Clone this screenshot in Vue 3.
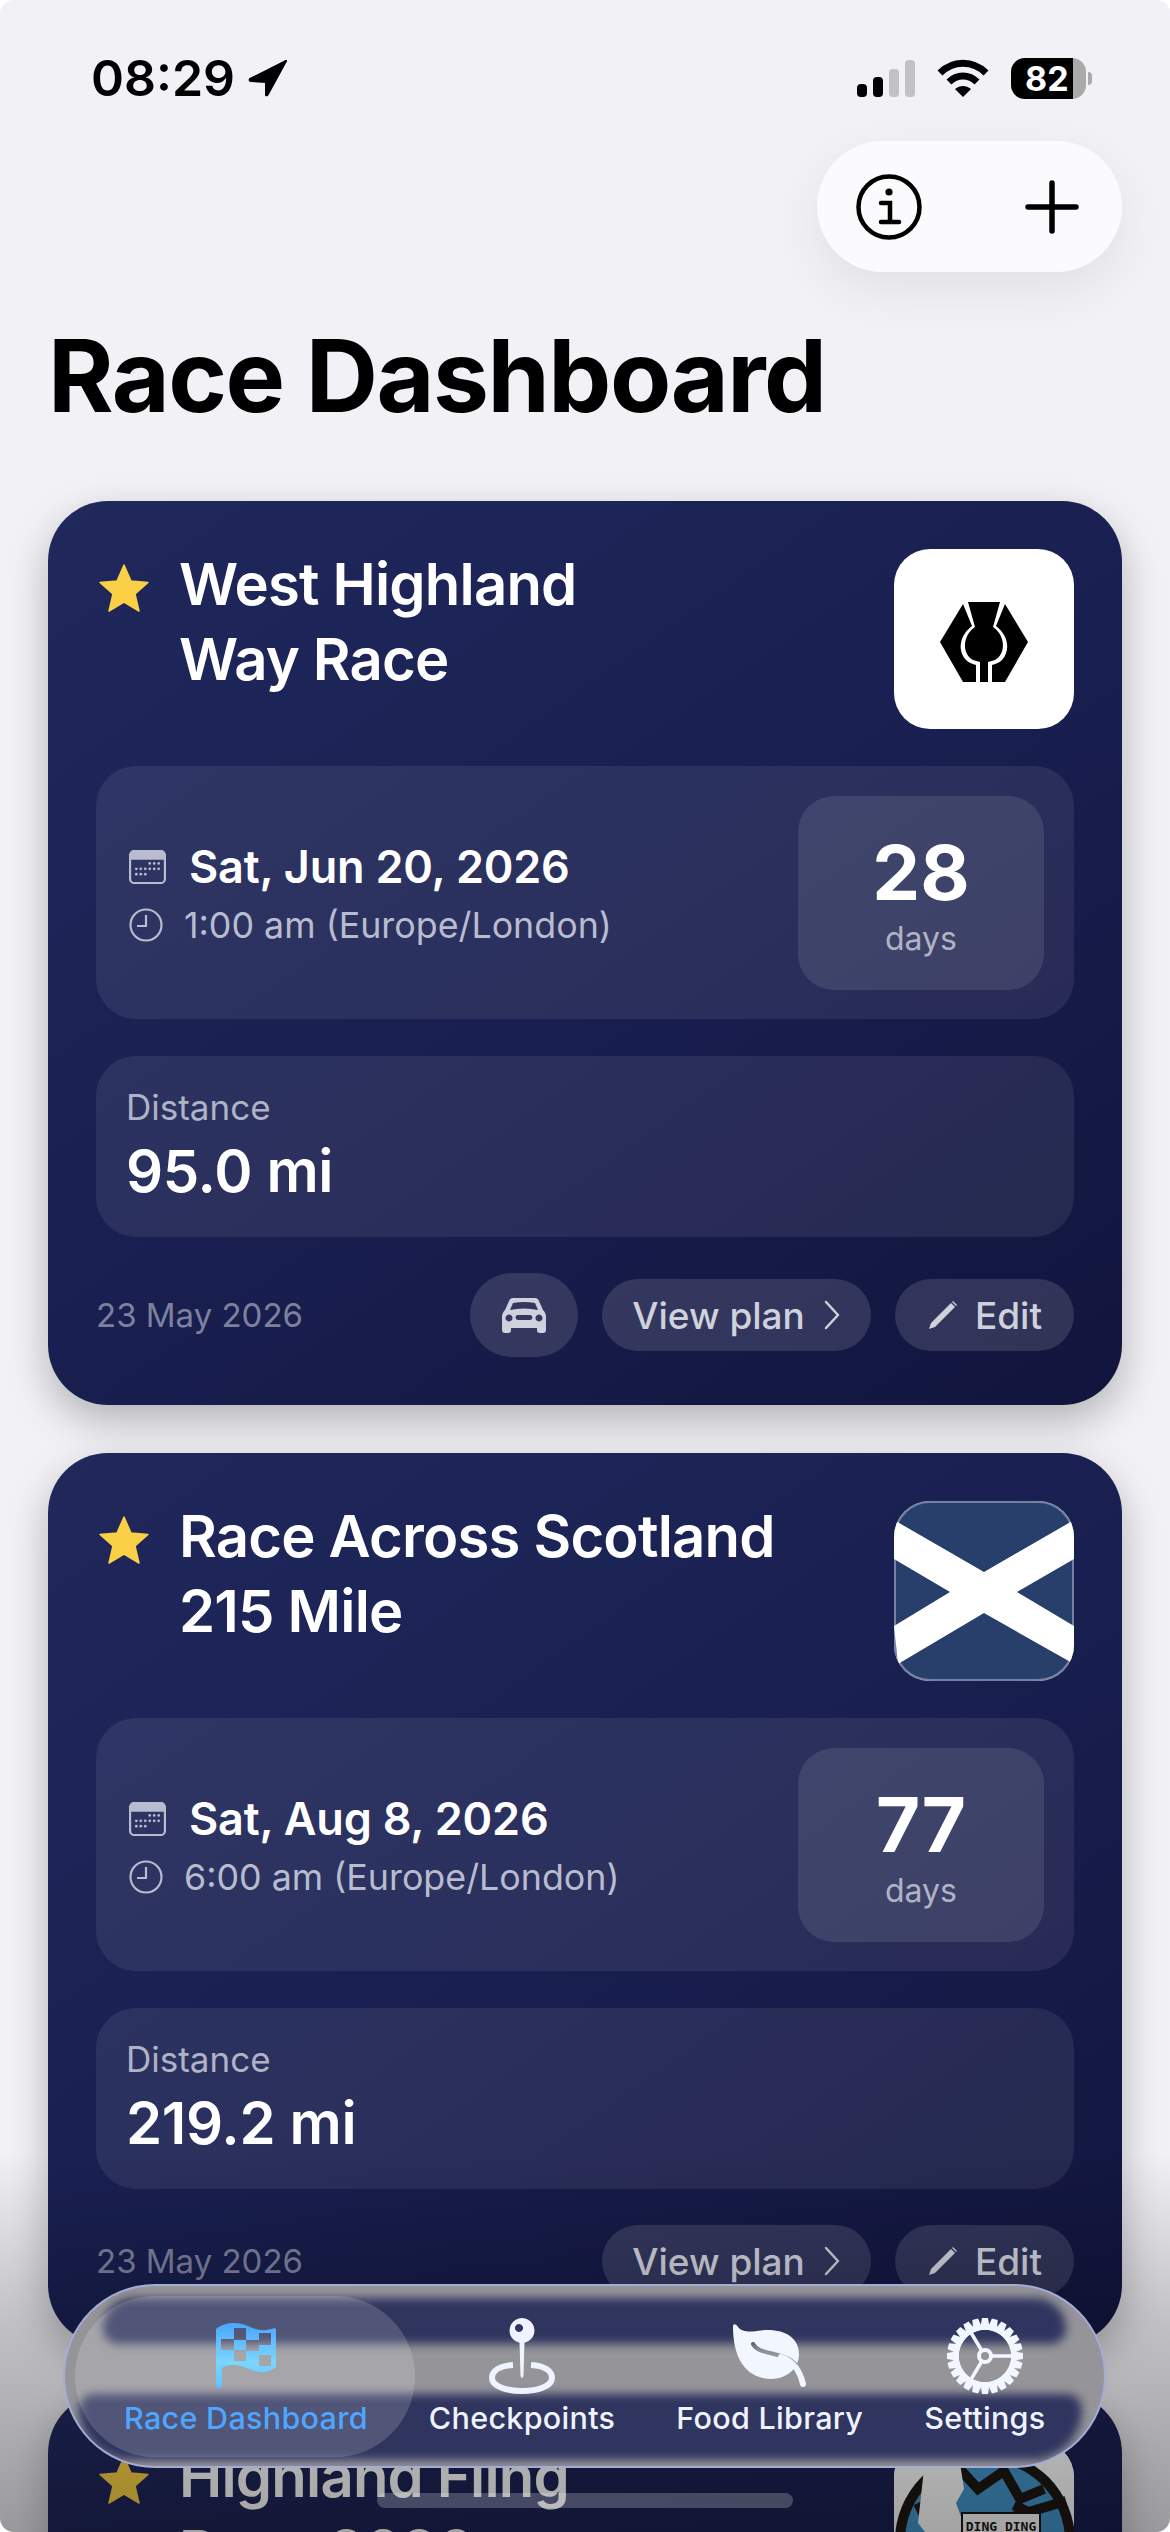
<script setup>
const races = [
  {
    name: ['West Highland', 'Way Race'],
    logo: 'thistle',
    date: 'Sat, Jun 20, 2026',
    time: '1:00 am (Europe/London)',
    days: 28,
    distance: '95.0 mi',
    added: '23 May 2026',
    car: true
  },
  {
    name: ['Race Across Scotland', '215 Mile'],
    logo: 'saltire',
    date: 'Sat, Aug 8, 2026',
    time: '6:00 am (Europe/London)',
    days: 77,
    distance: '219.2 mi',
    added: '23 May 2026',
    car: false
  },
  {
    name: ['Highland Fling', 'Race 2026'],
    logo: 'ding',
    date: 'Sat, Apr 24, 2027',
    time: '6:00 am (Europe/London)',
    days: 337,
    distance: '53.0 mi',
    added: '23 May 2026',
    car: false
  }
]

const tabs = [
  { label: 'Race Dashboard', icon: 'flag', active: true },
  { label: 'Checkpoints', icon: 'pin' },
  { label: 'Food Library', icon: 'leaf' },
  { label: 'Settings', icon: 'gear' }
]

const gearTeeth = Array.from({ length: 24 }, (_, i) => i * 15)
const calendarDots = [
  [23, 15], [28, 15], [33, 15],
  [8, 21], [13, 21], [18, 21], [23, 21], [28, 21], [33, 21],
  [8, 27], [13, 27], [18, 27]
]
</script>

<template>
  <div class="screen">
    <div class="status-bar">
      <div class="status-time">
        <span>08:29</span>
        <svg class="status-arrow" viewBox="0 0 40 38"><path d="M38 2 L2 20 Q1 22 3 22 L18 23 L18 36 Q19 37 20 35 Z" fill="#000" stroke="#000" stroke-width="2" stroke-linejoin="round" /></svg>
      </div>
      <div class="status-icons">
        <div class="signal">
          <i class="bar on b1"></i>
          <i class="bar on b2"></i>
          <i class="bar b3"></i>
          <i class="bar b4"></i>
        </div>
        <svg class="wifi" viewBox="0 0 52 38">
          <path d="M3 14 C16 1 36 1 49 14" fill="none" stroke="#000" stroke-width="7" />
          <path d="M12 23 C20 15 32 15 40 23" fill="none" stroke="#000" stroke-width="7" />
          <path d="M18 30 C23 26 29 26 34 30 L26 38 Z" fill="#000" />
        </svg>
        <div class="battery">
          <div class="battery-body"><span>82</span></div>
          <i class="battery-nub"></i>
        </div>
      </div>
    </div>

    <div class="top-actions">
      <div class="action-pill">
        <svg class="info-icon" viewBox="0 0 66 66" fill="none" stroke="#000" stroke-width="4.5">
          <circle cx="33" cy="33" r="30.5" />
          <circle cx="33" cy="18" r="3.6" fill="#000" stroke="none" />
          <path d="M25 29 H34 V47 M25 48 H43" stroke-linecap="round" />
        </svg>
        <svg class="plus-icon" viewBox="0 0 54 54" fill="none" stroke="#000" stroke-width="5.5" stroke-linecap="round">
          <path d="M27 3 V51 M3 27 H51" />
        </svg>
      </div>
    </div>

    <h1 class="page-title">Race Dashboard</h1>

    <div class="race-list">
      <div v-for="race in races" :key="race.name[0]" class="race-card">
        <div class="card-head">
          <svg class="star" viewBox="0 0 50 48"><path d="M25 1 L32 17 L49 18.500 L36 30 L40 47 L25 38 L10 47 L14 30 L1 18.500 L18 17 Z" fill="#f9d046" stroke="#f9d046" stroke-width="1.500" stroke-linejoin="round" /></svg>
          <div class="race-name">
            <div v-for="line in race.name" :key="line">{{ line }}</div>
          </div>
          <div class="race-logo" :class="'logo-' + race.logo">
            <svg v-if="race.logo === 'thistle'" class="thistle" viewBox="0 0 88 80">
              <path d="M23 2 L32 24 C20 33 17 48 26 58 C29 61 33 62 36 63 L36 80 L23 80 L0 40 Z" fill="#000" />
              <path d="M65 2 L56 24 C68 33 71 48 62 58 C59 61 55 62 52 63 L52 80 L65 80 L88 40 Z" fill="#000" />
              <path d="M28 0 H60 L53 25 C66 34 66 52 55 58 L48 60 V80 H40 V60 L33 58 C22 52 22 34 35 25 Z" fill="#000" />
            </svg>
            <svg v-else-if="race.logo === 'saltire'" viewBox="0 0 180 180">
              <rect width="180" height="180" fill="#283f6c" />
              <polygon points="0,19 90,71 180,19 180,58 123,91 180,125 180,163 90,112 4,163 0,125 56,91 0,58" fill="#fff" />
            </svg>
            <svg v-else viewBox="0 0 180 180">
              <rect width="180" height="180" fill="#fff" />
              <circle cx="91" cy="100" r="90" fill="#1c1712" />
              <circle cx="91" cy="100" r="80" fill="#4596cc" />
              <path d="M62 24 L84 48 L110 30 L126 58 L150 48 M118 76 L172 60 M24 62 L38 90 L20 112 M120 64 L136 72" fill="none" stroke="#1c1712" stroke-width="10" />
              <path d="M30 28 L66 22 L70 48 L62 62 L76 100 L50 130 L38 100 L24 82 Z" fill="#fff" />
              <rect x="68" y="72" width="78" height="26" fill="#fff" stroke="#1c1712" stroke-width="2" />
              <text x="107" y="90" font-size="13" font-weight="700" font-family="'DejaVu Sans Mono', monospace" text-anchor="middle" fill="#1c1712">DING DING</text>
            </svg>
          </div>
        </div>

        <div class="date-block">
          <div class="date-info">
            <div class="date-line">
              <svg class="calendar" viewBox="0 0 41 38">
                <rect x="1" y="1" width="39" height="36" rx="5" fill="none" stroke="#b9bccf" stroke-width="2.500" />
                <path d="M1 11 V6 a5 5 0 0 1 5 -5 H35 a5 5 0 0 1 5 5 V11 Z" fill="#b9bccf" />
                <circle v-for="dot in calendarDots" :key="dot.join()" :cx="dot[0]" :cy="dot[1]" r="1.500" fill="#b9bccf" />
              </svg>
              <span>{{ race.date }}</span>
            </div>
            <div class="time-line">
              <svg class="clock" viewBox="0 0 34 34" fill="none" stroke="#b9bccf" stroke-width="2.200">
                <circle cx="17" cy="17" r="15.500" />
                <path d="M17 7 V18 H8" />
              </svg>
              <span>{{ race.time }}</span>
            </div>
          </div>
          <div class="days-box">
            <div class="days-num">{{ race.days }}</div>
            <div class="days-label">days</div>
          </div>
        </div>

        <div class="distance-block">
          <div class="distance-label">Distance</div>
          <div class="distance-value">{{ race.distance }}</div>
        </div>

        <div class="card-foot">
          <div class="added">{{ race.added }}</div>
          <div class="foot-actions">
            <button v-if="race.car" class="chip chip-car">
              <svg viewBox="0 0 44 36">
                <path fill-rule="evenodd" fill="#cfd1dc" d="M11 1 H33 C35 1 36 2 37 4 L41 13 C43 15 44 17 44 20 V33 C44 35 43 36 41 36 H38 C36 36 35 35 35 33 V31 H9 V33 C9 35 8 36 6 36 H3 C1 36 0 35 0 33 V20 C0 17 1 15 3 13 L7 4 C8 2 9 1 11 1 Z M11 6 L8 13 Q22 10 36 13 L33 6 Q22 4 11 6 Z M7 17.500 a3.500 3.500 0 1 0 0.010 0 Z M37 17.500 a3.500 3.500 0 1 0 0.010 0 Z M16 18 H28 a2.500 2.500 0 0 1 0 5 H16 a2.500 2.500 0 0 1 0 -5 Z" />
              </svg>
            </button>
            <button class="chip">
              <span>View plan</span>
              <svg class="chevron" viewBox="0 0 18 30" fill="none" stroke="#cfd1dc" stroke-width="2.500" stroke-linecap="round" stroke-linejoin="round"><path d="M3 2 L15 15 L3 28" /></svg>
            </button>
            <button class="chip chip-edit">
              <svg class="pencil" viewBox="0 0 32 32"><path d="M24 4 L28 8 L8 28 L2 30 L4 24 Z" fill="#cfd1dc" /><path d="M26 2 L30 6 L29 7 L25 3 Z" fill="#cfd1dc" /></svg>
              <span>Edit</span>
            </button>
          </div>
        </div>
      </div>
    </div>

    <div class="bottom-fade"></div>

    <nav class="tab-bar">
      <i class="glass-band band-top"></i>
      <i class="glass-band band-bottom"></i>
      <i class="active-pill"></i>
      <div v-for="tab in tabs" :key="tab.label" class="tab" :class="{ active: tab.active }">
        <div class="icon-slot">
          <svg v-if="tab.icon === 'flag'" width="60" height="66" viewBox="0 0 60 66">
            <defs>
              <linearGradient id="flag-fill" x1="0" y1="0" x2="0" y2="1">
                <stop offset="0" stop-color="#4aa6fb" />
                <stop offset="0.6" stop-color="#7bd6ff" />
                <stop offset="1" stop-color="#62c0ff" />
              </linearGradient>
              <mask id="flag-cells">
                <rect width="60" height="66" fill="#fff" />
                <g fill="#000">
                  <rect x="18" y="5" width="12" height="12" />
                  <rect x="43" y="10" width="12" height="12" />
                  <rect x="5" y="16" width="13" height="11" />
                  <rect x="30" y="17" width="13" height="11" />
                  <rect x="18" y="27" width="12" height="11" />
                  <rect x="43" y="32" width="12" height="11" />
                </g>
              </mask>
            </defs>
            <path mask="url(#flag-cells)" fill="url(#flag-fill)" d="M0 6 C10 -2 24 -1 34 4 C43 8 51 8 58 5 Q60 5 60 7 V44 C52 51 42 50 33 46 C22 41 12 41 6 45 V63 Q3 67 0 63 Z" />
          </svg>
          <svg v-else-if="tab.icon === 'pin'" width="66" height="76" viewBox="0 0 66 76">
            <path fill="#eef3ff" fill-rule="evenodd" d="M33 0 a12.500 12.500 0 1 1 -0.010 0 Z M30 6 a4 4 0 1 0 0.010 0 Z" />
            <path fill="#eef3ff" d="M30.500 24 H35.500 L34.500 58 Q33 62 31.500 58 Z" />
            <path fill="none" stroke="#eef3ff" stroke-width="6" d="M24 47 C10 48 3 53 3 60 C3 68 17 73 33 73 C49 73 63 68 63 60 C63 53 56 48 42 47" />
          </svg>
          <svg v-else-if="tab.icon === 'leaf'" width="74" height="64" viewBox="0 0 74 64">
            <defs>
              <mask id="leaf-vein">
                <rect width="74" height="64" fill="#fff" />
                <path d="M20 20 C24 28 36 28 48 32 C56 34 60 37 66 44" fill="none" stroke="#000" stroke-width="4" stroke-linecap="round" />
              </mask>
            </defs>
            <path mask="url(#leaf-vein)" fill="#f2f6ff" d="M0 3 C0 -1 3 0 5 3 C9 8 16 8 24 7 C48 3 66 12 66 30 C66 48 48 58 30 54 C10 50 0 30 0 3 Z" />
            <path d="M48 33 C60 37 67 47 70 60" fill="none" stroke="#f2f6ff" stroke-width="6" stroke-linecap="round" />
          </svg>
          <svg v-else width="76" height="76" viewBox="0 0 76 76">
            <g fill="#f2f6ff">
              <path v-for="deg in gearTeeth" :key="deg" d="M35 0 H41 L43 12 H33 Z" :transform="`rotate(${deg} 38 38)`" />
            </g>
            <g fill="none" stroke="#f2f6ff">
              <circle cx="38" cy="38" r="29" stroke-width="5" />
              <circle cx="38" cy="38" r="6" stroke-width="4" />
              <path d="M44 38 H67 M35 33 L23 13 M35 43 L23 63" stroke-width="3.500" />
            </g>
          </svg>
        </div>
        <span class="tab-label">{{ tab.label }}</span>
      </div>
    </nav>

    <div class="home-indicator"></div>
  </div>
</template>

<style>
html,
body {
  background: #fff;
}
</style>

<style scoped>
.screen {
  position: relative;
  box-sizing: border-box;
  width: 1170px;
  height: 2532px;
  padding: 0 48px;
  overflow: hidden;
  border-radius: 14px;
  background: #f1f1f6;
  font-family: Inter, "Liberation Sans", sans-serif;
}

.status-bar {
  display: flex;
  justify-content: space-between;
  align-items: center;
  box-sizing: border-box;
  height: 141px;
  padding: 40px 30px 25px 43px;
}

.status-time {
  display: flex;
  align-items: center;
  gap: 13px;
  font-size: 50px;
  font-weight: 600;
  color: #000;
}

.status-arrow {
  width: 40px;
  height: 38px;
}

.status-icons {
  display: flex;
  align-items: center;
  gap: 22px;
}

.signal {
  display: flex;
  align-items: flex-end;
  gap: 6px;
  height: 37px;
}

.bar {
  display: block;
  width: 10px;
  border-radius: 4px;
  background: #c2c2c6;
}

.bar.on {
  background: #000;
}

.b1 { height: 13px; }
.b2 { height: 20px; }
.b3 { height: 28px; }
.b4 { height: 37px; }

.wifi {
  width: 52px;
  height: 38px;
}

.battery {
  display: flex;
  align-items: center;
  gap: 2px;
}

.battery-body {
  box-sizing: border-box;
  width: 75px;
  height: 41px;
  padding-left: 14px;
  border-radius: 14px;
  background: linear-gradient(90deg, #000 83%, #aaa 83%);
  color: #fff;
  font-size: 34px;
  font-weight: 700;
  line-height: 41px;
}

.battery-nub {
  display: block;
  width: 4px;
  height: 13px;
  border-radius: 0 4px 4px 0;
  background: #aaa;
}

.top-actions {
  display: flex;
  justify-content: flex-end;
}

.action-pill {
  display: flex;
  justify-content: space-between;
  align-items: center;
  box-sizing: border-box;
  width: 305px;
  height: 131px;
  padding: 0 43px 0 39px;
  border-radius: 66px;
  background: #fbfbfe;
  box-shadow: 0 18px 50px rgba(0, 0, 0, 0.07);
}

.info-icon {
  width: 66px;
  height: 66px;
}

.plus-icon {
  width: 54px;
  height: 54px;
}

.page-title {
  margin: 43px 0 65px 0;
  font-size: 100px;
  font-weight: 700;
  line-height: 121px;
  letter-spacing: -1.5px;
  color: #000;
}

.race-list {
  display: flex;
  flex-direction: column;
  gap: 48px;
}

.race-card {
  padding: 48px;
  border-radius: 60px;
  background: linear-gradient(145deg, #20285c 0%, #191f50 50%, #11153d 100%);
  box-shadow: 0 16px 40px rgba(0, 0, 0, 0.26);
}

.card-head {
  display: flex;
  align-items: flex-start;
  height: 180px;
  margin-bottom: 37px;
}

.star {
  flex: none;
  width: 50px;
  height: 48px;
  margin: 15px 30px 0 3px;
}

.race-name {
  flex: 1;
  margin-top: -2px;
  font-size: 58px;
  font-weight: 600;
  line-height: 75px;
  color: #fff;
  letter-spacing: -0.8px;
}

.race-logo {
  flex: none;
  box-sizing: border-box;
  width: 180px;
  height: 180px;
  overflow: hidden;
  border-radius: 36px;
  background: #fff;
}

.race-logo svg {
  display: block;
  width: 100%;
  height: 100%;
}

.logo-thistle {
  display: flex;
  justify-content: center;
  align-items: center;
}

.race-logo .thistle {
  width: 88px;
  height: 80px;
  margin-top: 5px;
}

.logo-saltire {
  outline: 2px solid rgba(255, 255, 255, 0.35);
  outline-offset: -2px;
}

.date-block {
  display: flex;
  justify-content: space-between;
  align-items: center;
  box-sizing: border-box;
  height: 253px;
  padding: 0 30px 0 33px;
  border-radius: 40px;
  background: rgba(255, 255, 255, 0.08);
}

.date-line {
  display: flex;
  align-items: center;
  gap: 23px;
  font-size: 45px;
  font-weight: 600;
  color: #fff;
  line-height: 56px;
  letter-spacing: -0.2px;
}

.calendar {
  width: 37px;
  height: 34px;
}

.time-line {
  display: flex;
  align-items: center;
  gap: 21px;
  margin-top: 8px;
  font-size: 35.8px;
  color: #b9bccf;
  line-height: 44px;
}

.clock {
  width: 34px;
  height: 34px;
}

.days-box {
  box-sizing: border-box;
  width: 246px;
  height: 194px;
  padding-top: 32px;
  border-radius: 36px;
  background: rgba(255, 255, 255, 0.1);
  text-align: center;
}

.days-num {
  font-size: 76px;
  font-weight: 700;
  line-height: 88px;
  color: #fff;
}

.days-label {
  margin-top: 3px;
  font-size: 32px;
  line-height: 40px;
  color: #b0b3c6;
}

.distance-block {
  box-sizing: border-box;
  height: 181px;
  margin-top: 37px;
  padding: 30px 30px;
  border-radius: 40px;
  background: rgba(255, 255, 255, 0.08);
}

.distance-label {
  font-size: 35px;
  line-height: 42px;
  color: #b0b3c6;
}

.distance-value {
  margin-top: 7px;
  font-size: 58px;
  font-weight: 600;
  line-height: 72px;
  letter-spacing: -0.3px;
  color: #fff;
}

.card-foot {
  display: flex;
  justify-content: space-between;
  align-items: center;
  margin-top: 36px;
}

.added {
  font-size: 33px;
  color: #7d819d;
}

.foot-actions {
  display: flex;
  align-items: center;
  gap: 24px;
}

.chip {
  display: flex;
  align-items: center;
  gap: 18px;
  height: 72px;
  padding: 0 30px;
  border: none;
  border-radius: 36px;
  background: rgba(255, 255, 255, 0.13);
  font-family: inherit;
  font-size: 37px;
  font-weight: 500;
  color: #cfd1dc;
}

.chip-car {
  justify-content: center;
  width: 108px;
  height: 84px;
  padding: 0;
  border-radius: 42px;
}

.chip-car svg {
  width: 44px;
  height: 36px;
}

.chip-edit {
  gap: 16px;
  padding: 0 32px;
}

.chevron {
  width: 18px;
  height: 30px;
}

.pencil {
  width: 32px;
  height: 32px;
}

.bottom-fade {
  position: absolute;
  left: 0;
  right: 0;
  bottom: 0;
  height: 380px;
  background: linear-gradient(180deg, rgba(0, 0, 0, 0), rgba(0, 0, 0, 0.2) 45%, rgba(0, 0, 0, 0.36));
  pointer-events: none;
}

.tab-bar {
  position: absolute;
  left: 63px;
  top: 2284px;
  display: flex;
  gap: 61px;
  box-sizing: border-box;
  width: 1043px;
  height: 184px;
  padding: 32px 0 0 59px;
  overflow: hidden;
  border: 2px solid rgba(170, 180, 235, 0.75);
  border-radius: 92px;
  background: #959499;
}

.glass-band {
  position: absolute;
  display: block;
  background: #30355f;
  filter: blur(5px);
}

.band-top {
  left: 38px;
  right: 38px;
  top: 12px;
  height: 46px;
  border-radius: 40px 40px 20px 20px;
}

.band-bottom {
  left: 14px;
  right: 22px;
  top: 108px;
  height: 66px;
  border-radius: 24px 24px 80px 80px;
}

.active-pill {
  position: absolute;
  left: 10px;
  top: 10px;
  display: block;
  width: 340px;
  height: 161px;
  border-radius: 80px;
  background: rgba(255, 255, 255, 0.16);
}

.tab {
  position: relative;
  display: flex;
  flex-direction: column;
  align-items: center;
  color: #eef3ff;
}

.icon-slot {
  display: flex;
  justify-content: center;
  align-items: center;
  height: 76px;
  margin-bottom: 5px;
}

.tab-label {
  font-size: 30.5px;
  font-weight: 500;
  line-height: 38px;
  white-space: nowrap;
  letter-spacing: 0.3px;
}

.tab.active {
  color: #4ea6ff;
}

.home-indicator {
  position: absolute;
  left: 377px;
  top: 2493px;
  width: 416px;
  height: 15px;
  border-radius: 8px;
  background: rgba(255, 255, 255, 0.22);
}
</style>
